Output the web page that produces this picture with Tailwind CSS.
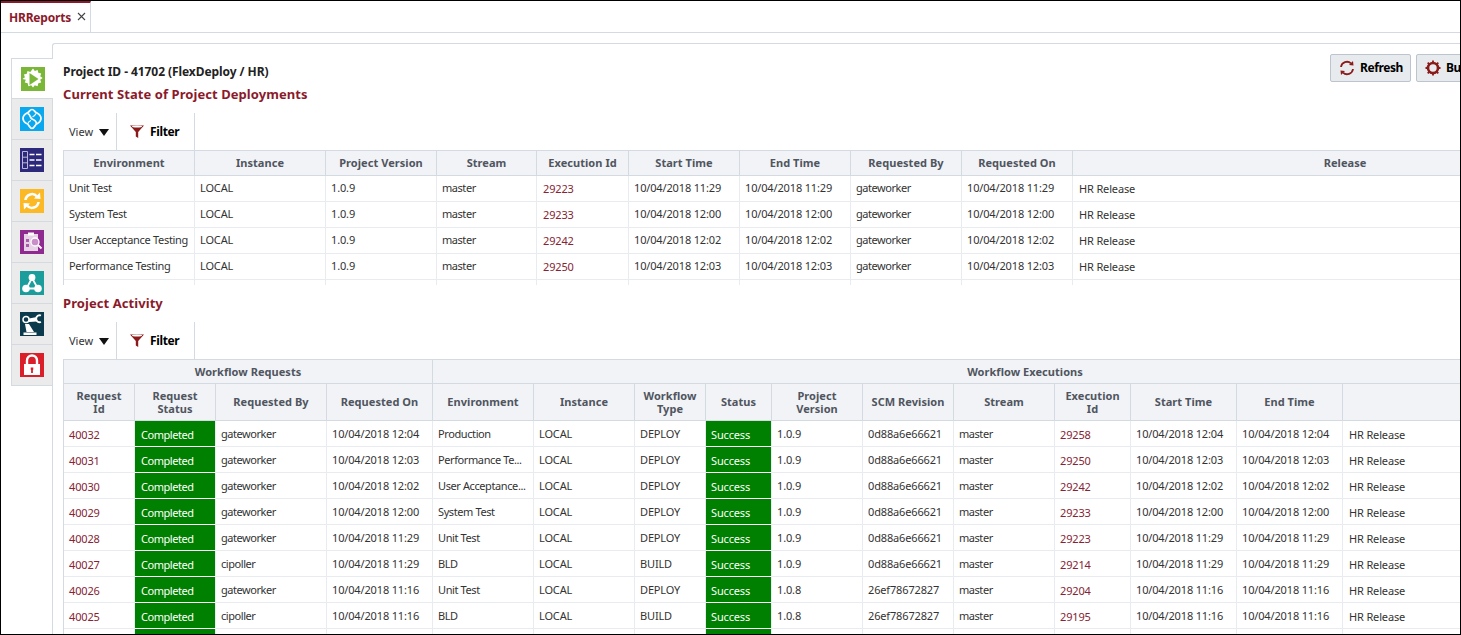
<!DOCTYPE html>
<html>
<head>
<meta charset="utf-8">
<script src="https://cdn.jsdelivr.net/npm/@tailwindcss/browser@4"></script>
</head>
<body class="bg-white">
<div class="w-[1461px] h-[635px] overflow-hidden border border-black flex flex-col bg-white font-['Noto_Sans',sans-serif] text-[11px] tracking-[-0.15px] text-[#333]">
  <!-- tab bar -->
  <div class="h-[32px] shrink-0 border-b border-[#d3dae2] flex">
    <div class="w-[90px] h-[32px] border-t-2 border-t-[#8b1a2b] border-r border-r-[#d3dae2] border-b border-b-[#d3dae2] bg-white flex items-center pl-[8px] gap-[6px]">
      <span class="font-bold text-[12px] tracking-[-0.2px] text-[#8b1a2b]">HRReports</span>
      <svg width="9" height="9" viewBox="0 0 9 9" class="mb-[2px]"><path d="M1 1l7 7M8 1L1 8" stroke="#444" stroke-width="1.1"/></svg>
    </div>
  </div>
  <!-- body -->
  <div class="flex-1 min-h-0 flex pt-[10px] pl-[10px]">
    <!-- side tabs -->
    <div class="w-[42px] shrink-0 pt-[15px]">
      <div class="h-[41px] w-[42px] relative z-10 bg-white border-l border-t border-b border-[#d3dae2] flex items-center justify-center">
        <svg width="24" height="24" viewBox="0 0 24 24"><rect width="24" height="24" fill="#7ab738"/><path d="M12 1.500l1.800 2.400 2.800-1 .7 2.900 2.900.7-1 2.800 2.400 1.700-2.400 1.800 1 2.800-2.900.7-.7 2.900-2.800-1-1.800 2.400-1.800-2.400-2.800 1-.7-2.900-2.900-.7 1-2.800L1.500 12l2.400-1.700-1-2.800 2.900-.7.7-2.900 2.800 1z" fill="#fff"/><path d="M8.500 6l9 6-9 6z" fill="#7ab738"/></svg>
      </div>
      <div class="h-[41px] bg-[#ebebeb] border-l border-b border-r border-[#d3dae2] flex items-center justify-center">
        <svg width="24" height="24" viewBox="0 0 24 24"><rect width="24" height="24" fill="#0aa8ee"/><path d="M12 2.500c2 0 2.500 2 4 3s5 2 5 6-3.500 4.500-5 6-2 4-4 4-2.500-2.500-4-4-5-2-5-6 3.500-5 5-6 2-3 4-3z" fill="none" stroke="#fff" stroke-width="1.700"/><path d="M7.500 6.500c3 .5 2.500 4.500 4.500 5.500s4.500 1 4.500 5.500" fill="none" stroke="#fff" stroke-width="1.700"/><path d="M16 6.500c-1 2-2 3-3.500 3.500M7.500 17c1-2 2-3 3.500-3.500" fill="none" stroke="#fff" stroke-width="1.200"/></svg>
      </div>
      <div class="h-[41px] bg-[#ebebeb] border-l border-b border-r border-[#d3dae2] flex items-center justify-center">
        <svg width="24" height="24" viewBox="0 0 24 24"><rect width="24" height="24" fill="#2d2a7c"/><path d="M2.500 3.500h5v17h-5zM2.500 9.200h5M2.500 14.800h5" fill="none" stroke="#b9b8dc" stroke-width="1"/><path d="M9.500 6.500h5M16 6.500h5.500M9.500 12h5M16 12h5.500M9.500 17.500h5M16 17.500h5.500" stroke="#fff" stroke-width="1.400"/></svg>
      </div>
      <div class="h-[41px] bg-[#ebebeb] border-l border-b border-r border-[#d3dae2] flex items-center justify-center">
        <svg width="24" height="24" viewBox="0 0 24 24"><rect width="24" height="24" fill="#fcb926"/><path d="M5.500 11a6.500 6.500 0 0 1 11.500-3.500" fill="none" stroke="#fff" stroke-width="2.600"/><path d="M14 9.500l6.500.5-.5-6.500z" fill="#fff"/><path d="M18.500 13A6.500 6.500 0 0 1 7 16.500" fill="none" stroke="#fff" stroke-width="2.600"/><path d="M10 14.500l-6.500-.5.5 6.500z" fill="#fff"/></svg>
      </div>
      <div class="h-[41px] bg-[#ebebeb] border-l border-b border-r border-[#d3dae2] flex items-center justify-center">
        <svg width="24" height="24" viewBox="0 0 24 24"><rect width="24" height="24" fill="#8f2a91"/><rect x="4" y="4" width="14" height="17" fill="#e6d3e6"/><rect x="8" y="2.500" width="6" height="3" fill="#fff"/><path d="M6 9h3v3H6zM6 14h3v3H6z" fill="#8f2a91" opacity=".7"/><circle cx="15" cy="12" r="4" fill="#c98fc9" stroke="#fff" stroke-width="1.300"/><path d="M18 15l3.500 3.500" stroke="#fff" stroke-width="1.800"/></svg>
      </div>
      <div class="h-[41px] bg-[#ebebeb] border-l border-b border-r border-[#d3dae2] flex items-center justify-center">
        <svg width="24" height="24" viewBox="0 0 24 24"><rect width="24" height="24" fill="#1a9d9b"/><circle cx="12" cy="6.500" r="3.400" fill="#fff"/><circle cx="6" cy="17.500" r="3.800" fill="#fff"/><circle cx="18" cy="17.500" r="3.800" fill="#fff"/><path d="M12 7l-5.500 10.500M12 7l5 9M7 17.500h10" fill="none" stroke="#fff" stroke-width="1.800"/></svg>
      </div>
      <div class="h-[41px] bg-[#ebebeb] border-l border-b border-r border-[#d3dae2] flex items-center justify-center">
        <svg width="24" height="24" viewBox="0 0 24 24"><rect width="24" height="24" fill="#0c3a4d"/><path d="M3.500 20.500h13V23h-13z" fill="#fff"/><path d="M6.500 20L5 12h4l5 8z" fill="#fff"/><circle cx="6" cy="7.500" r="3" fill="none" stroke="#fff" stroke-width="1.500"/><path d="M9 6.500l8-1.500v4.500l-8 .5z" fill="#fff"/><path d="M21 3.500a3.500 3.500 0 1 0 0 6.500" fill="none" stroke="#fff" stroke-width="1.800"/></svg>
      </div>
      <div class="h-[41px] bg-[#ebebeb] border-l border-b border-r border-[#d3dae2] flex items-center justify-center">
        <svg width="24" height="24" viewBox="0 0 24 24"><rect width="24" height="24" fill="#da1f2b"/><path d="M7 11V7.500a5 5 0 0 1 10 0V11" fill="none" stroke="#fff" stroke-width="2.400"/><rect x="4" y="11" width="16" height="11" fill="#fff"/><path d="M10.700 14.500h2.600v2l-.4.500v3h-1.800v-3l-.4-.5z" fill="#da1f2b"/></svg>
      </div>
    </div>
    <!-- panel -->
    <div class="flex-1 min-w-0 border-l border-l-[#d3dae2] border-t border-t-[#d3dae2] rounded-tl-[3px] pl-[10px] -ml-px">
      <!-- heading row -->
      <div class="h-[38px] flex justify-between relative">
        <div class="pt-[19px] font-bold text-[12px] tracking-[-0.07px] text-[#222]">Project ID - 41702 (FlexDeploy / HR)</div>
        <div class="flex gap-[5px] pt-[10px] absolute left-[1267px] w-[140px] text-[12px] tracking-[-0.4px]">
          <div class="h-[28px] w-[81px] shrink-0 rounded-[2px] border border-[#bcc5cd] bg-[#e8ebed] flex items-center pl-[8px] gap-[5px] font-bold text-black">
            <svg width="16" height="16" viewBox="0 0 16 16"><path d="M2 7a6 6 0 0 1 10-3.600M14 9a6 6 0 0 1-10 3.600" fill="none" stroke="#8b1a1a" stroke-width="1.800"/><path d="M10 5l4.500.5L14 1zM6 11l-4.500-.5L2 15z" fill="#8b1a1a"/></svg>
            Refresh
          </div>
          <div class="h-[28px] w-[81px] shrink-0 rounded-[2px] border border-[#bcc5cd] bg-[#e8ebed] flex items-center pl-[8px] gap-[5px] font-bold text-black">
            <svg width="16" height="16" viewBox="0 0 16 16"><circle cx="8" cy="8" r="5" fill="none" stroke="#8b1a1a" stroke-width="2.600"/><path d="M8 .5v2.500M8 13v2.500M.5 8H3M13 8h2.500M2.700 2.700l1.800 1.800M11.500 11.500l1.800 1.800M13.300 2.700l-1.800 1.800M4.500 11.500l-1.800 1.800" stroke="#8b1a1a" stroke-width="1.800"/></svg>
            Build
          </div>
        </div>
      </div>
      <h2 class="h-[31px] text-[13px] font-bold text-[#8b1a2b] leading-[24px] tracking-[0.07px]">Current State of Project Deployments</h2>
      <!-- toolbar -->
      <div class="h-[37px] flex items-stretch">
        <div class="w-[54px] border-r border-[#d3dae2] flex items-center pl-[6px] gap-[6px] pt-[2px] tracking-normal">View <svg width="10" height="7" viewBox="0 0 10 7"><path d="M0 0h10L5 7z" fill="#111"/></svg></div>
        <div class="w-[78px] border-r border-[#d3dae2] flex items-center pl-[12px] gap-[5px] font-bold text-[12px] tracking-[-0.35px] text-black">
          <svg width="16" height="15" viewBox="0 0 16 15"><path d="M1 1.500h14L9.200 8v6l-2.400-1.500V8z" fill="#8b1a1a"/><ellipse cx="8" cy="2.500" rx="5" ry="1" fill="#fff"/></svg>
          Filter
        </div>
      </div>
      <!-- table 1 -->
      <div class="h-[135px] overflow-hidden">
        <table class="table-fixed w-[1454px] border-separate border-spacing-0 border-l border-t border-[#d3dae2] [&_th]:bg-[#f1f3f6] [&_th]:h-[25px] [&_th]:border-r [&_th]:border-b [&_th]:border-[#d3dae2] [&_th]:font-bold [&_th]:tracking-[0.05px] [&_th]:text-[#505560] [&_th]:text-center [&_td]:h-[26px] [&_td]:border-r [&_td]:border-b [&_td]:border-[#e8ebef] [&_td]:px-[5px] [&_td]:whitespace-nowrap [&_td:nth-child(1)]:tracking-[-0.3px] [&_td:nth-child(4)]:tracking-[-0.45px] [&_td:nth-child(8)]:tracking-[-0.45px] [&_td:nth-child(5)]:text-[#862433] [&_td:nth-child(5)]:pt-[2px] [&_td:nth-child(5)]:pl-[6px] [&_td:nth-child(10)]:pt-[2px] [&_td:nth-child(10)]:pl-[6px]">
          <colgroup><col class="w-[131px]"><col class="w-[131px]"><col class="w-[111px]"><col class="w-[100px]"><col class="w-[92px]"><col class="w-[111px]"><col class="w-[111px]"><col class="w-[111px]"><col class="w-[111px]"><col class="w-[545px]"></colgroup>
          <thead><tr><th>Environment</th><th>Instance</th><th>Project Version</th><th>Stream</th><th>Execution Id</th><th>Start Time</th><th>End Time</th><th>Requested By</th><th>Requested On</th><th>Release</th></tr></thead>
          <tbody>
            <tr><td>Unit Test</td><td>LOCAL</td><td>1.0.9</td><td>master</td><td>29223</td><td>10/04/2018 11:29</td><td>10/04/2018 11:29</td><td>gateworker</td><td>10/04/2018 11:29</td><td>HR Release</td></tr>
            <tr><td>System Test</td><td>LOCAL</td><td>1.0.9</td><td>master</td><td>29233</td><td>10/04/2018 12:00</td><td>10/04/2018 12:00</td><td>gateworker</td><td>10/04/2018 12:00</td><td>HR Release</td></tr>
            <tr><td>User Acceptance Testing</td><td>LOCAL</td><td>1.0.9</td><td>master</td><td>29242</td><td>10/04/2018 12:02</td><td>10/04/2018 12:02</td><td>gateworker</td><td>10/04/2018 12:02</td><td>HR Release</td></tr>
            <tr><td>Performance Testing</td><td>LOCAL</td><td>1.0.9</td><td>master</td><td>29250</td><td>10/04/2018 12:03</td><td>10/04/2018 12:03</td><td>gateworker</td><td>10/04/2018 12:03</td><td>HR Release</td></tr>
            <tr><td></td><td></td><td></td><td></td><td></td><td></td><td></td><td></td><td></td><td></td></tr>
          </tbody>
        </table>
      </div>
      <h2 class="h-[37px] text-[13px] font-bold text-[#8b1a2b] leading-[36px] tracking-[0.07px]">Project Activity</h2>
      <div class="h-[37px] flex items-stretch">
        <div class="w-[54px] border-r border-[#d3dae2] flex items-center pl-[6px] gap-[6px] pt-[2px] tracking-normal">View <svg width="10" height="7" viewBox="0 0 10 7"><path d="M0 0h10L5 7z" fill="#111"/></svg></div>
        <div class="w-[78px] border-r border-[#d3dae2] flex items-center pl-[12px] gap-[5px] font-bold text-[12px] tracking-[-0.35px] text-black">
          <svg width="16" height="15" viewBox="0 0 16 15"><path d="M1 1.500h14L9.200 8v6l-2.400-1.500V8z" fill="#8b1a1a"/><ellipse cx="8" cy="2.500" rx="5" ry="1" fill="#fff"/></svg>
          Filter
        </div>
      </div>
      <!-- table 2 -->
      <table class="table-fixed w-[1554px] border-separate border-spacing-0 border-l border-t border-[#d3dae2] [&_th]:bg-[#f1f3f6] [&_th]:border-r [&_th]:border-b [&_th]:border-[#d3dae2] [&_th]:font-bold [&_th]:tracking-[0.05px] [&_th]:text-[#505560] [&_th]:text-center [&_th]:leading-[13px] [&_td]:h-[26px] [&_td]:border-r [&_td]:border-b [&_td]:border-[#e8ebef] [&_td]:px-[5px] [&_td]:pt-[2px] [&_td]:whitespace-nowrap [&_td:nth-child(1)]:text-[#862433] [&_td:nth-child(1)]:pt-[4px] [&_td:nth-child(2)]:bg-[#008000] [&_td:nth-child(2)]:text-white [&_td:nth-child(2)]:border-b-white [&_td:nth-child(2)]:pt-[4px] [&_td:nth-child(2)]:pl-[6px] [&_td:nth-child(2)]:tracking-[-0.45px] [&_td:nth-child(3)]:tracking-[-0.45px] [&_td:nth-child(5)]:tracking-[-0.4px] [&_td:nth-child(11)]:tracking-[-0.45px] [&_td:nth-child(8)]:bg-[#008000] [&_td:nth-child(8)]:text-white [&_td:nth-child(8)]:border-b-white [&_td:nth-child(8)]:pt-[4px] [&_td:nth-child(12)]:text-[#862433] [&_td:nth-child(12)]:pt-[4px] [&_td:nth-child(15)]:pt-[4px] [&_td:nth-child(15)]:pl-[6px]">
        <colgroup><col class="w-[71px]"><col class="w-[81px]"><col class="w-[111px]"><col class="w-[106px]"><col class="w-[101px]"><col class="w-[101px]"><col class="w-[71px]"><col class="w-[66px]"><col class="w-[91px]"><col class="w-[91px]"><col class="w-[101px]"><col class="w-[76px]"><col class="w-[106px]"><col class="w-[106px]"><col class="w-[275px]"></colgroup>
        <thead>
          <tr class="[&_th]:h-[24px]"><th colspan="4">Workflow Requests</th><th colspan="11">Workflow Executions</th></tr>
          <tr class="[&_th]:h-[37px] [&_th]:pb-[1px]"><th>Request<br>Id</th><th>Request<br>Status</th><th>Requested By</th><th>Requested On</th><th>Environment</th><th>Instance</th><th>Workflow<br>Type</th><th>Status</th><th>Project<br>Version</th><th>SCM Revision</th><th>Stream</th><th>Execution<br>Id</th><th>Start Time</th><th>End Time</th><th></th></tr>
        </thead>
        <tbody>
          <tr><td>40032</td><td>Completed</td><td>gateworker</td><td>10/04/2018 12:04</td><td>Production</td><td>LOCAL</td><td>DEPLOY</td><td>Success</td><td>1.0.9</td><td>0d88a6e66621</td><td>master</td><td>29258</td><td>10/04/2018 12:04</td><td>10/04/2018 12:04</td><td>HR Release</td></tr>
          <tr><td>40031</td><td>Completed</td><td>gateworker</td><td>10/04/2018 12:03</td><td>Performance Te...</td><td>LOCAL</td><td>DEPLOY</td><td>Success</td><td>1.0.9</td><td>0d88a6e66621</td><td>master</td><td>29250</td><td>10/04/2018 12:03</td><td>10/04/2018 12:03</td><td>HR Release</td></tr>
          <tr><td>40030</td><td>Completed</td><td>gateworker</td><td>10/04/2018 12:02</td><td>User Acceptance...</td><td>LOCAL</td><td>DEPLOY</td><td>Success</td><td>1.0.9</td><td>0d88a6e66621</td><td>master</td><td>29242</td><td>10/04/2018 12:02</td><td>10/04/2018 12:02</td><td>HR Release</td></tr>
          <tr><td>40029</td><td>Completed</td><td>gateworker</td><td>10/04/2018 12:00</td><td>System Test</td><td>LOCAL</td><td>DEPLOY</td><td>Success</td><td>1.0.9</td><td>0d88a6e66621</td><td>master</td><td>29233</td><td>10/04/2018 12:00</td><td>10/04/2018 12:00</td><td>HR Release</td></tr>
          <tr><td>40028</td><td>Completed</td><td>gateworker</td><td>10/04/2018 11:29</td><td>Unit Test</td><td>LOCAL</td><td>DEPLOY</td><td>Success</td><td>1.0.9</td><td>0d88a6e66621</td><td>master</td><td>29223</td><td>10/04/2018 11:29</td><td>10/04/2018 11:29</td><td>HR Release</td></tr>
          <tr><td>40027</td><td>Completed</td><td>cipoller</td><td>10/04/2018 11:29</td><td>BLD</td><td>LOCAL</td><td>BUILD</td><td>Success</td><td>1.0.9</td><td>0d88a6e66621</td><td>master</td><td>29214</td><td>10/04/2018 11:29</td><td>10/04/2018 11:29</td><td>HR Release</td></tr>
          <tr><td>40026</td><td>Completed</td><td>gateworker</td><td>10/04/2018 11:16</td><td>Unit Test</td><td>LOCAL</td><td>DEPLOY</td><td>Success</td><td>1.0.8</td><td>26ef78672827</td><td>master</td><td>29204</td><td>10/04/2018 11:16</td><td>10/04/2018 11:16</td><td>HR Release</td></tr>
          <tr><td>40025</td><td>Completed</td><td>cipoller</td><td>10/04/2018 11:16</td><td>BLD</td><td>LOCAL</td><td>BUILD</td><td>Success</td><td>1.0.8</td><td>26ef78672827</td><td>master</td><td>29195</td><td>10/04/2018 11:16</td><td>10/04/2018 11:16</td><td>HR Release</td></tr>
          <tr><td></td><td></td><td></td><td></td><td></td><td></td><td></td><td></td><td></td><td></td><td></td><td></td><td></td><td></td><td></td></tr>
        </tbody>
      </table>
    </div>
  </div>
</div>
</body>
</html>
